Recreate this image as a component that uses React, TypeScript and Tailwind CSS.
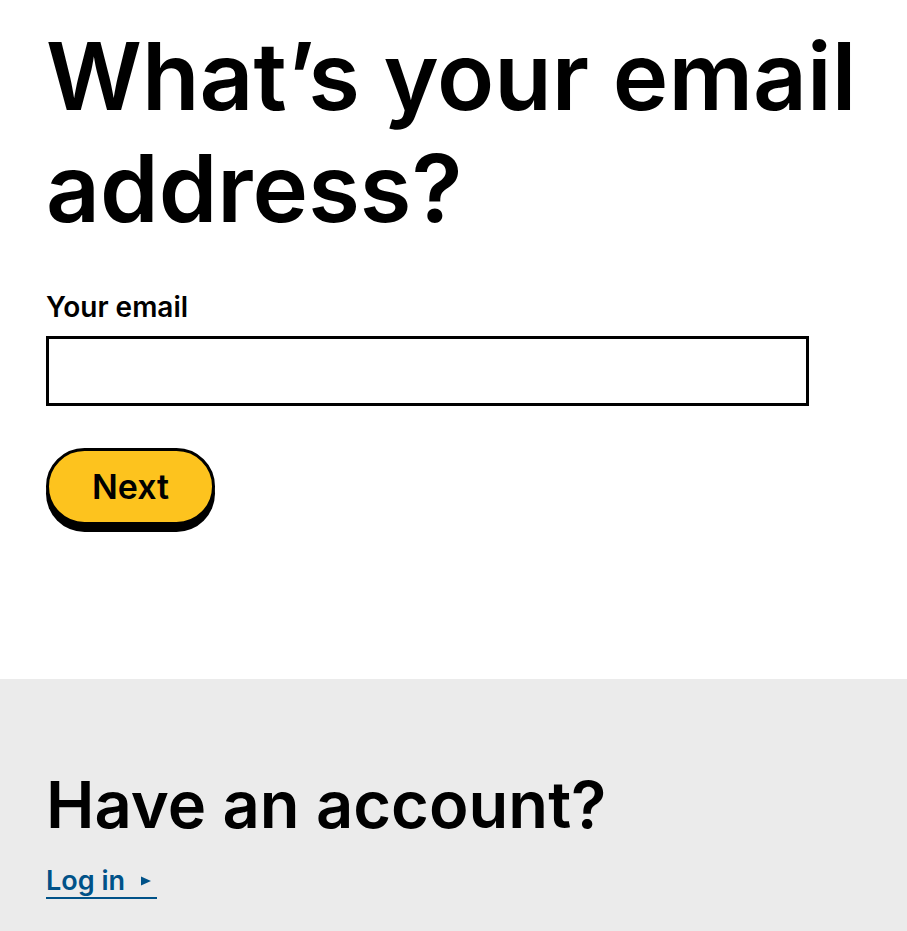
export default function App() {
  return (
    <div className="min-h-screen bg-[#ebebeb] font-['Century_Gothic','Inter','Open_Sans',sans-serif] text-black">
      <main className="bg-white px-[46px] pt-5 pb-[147px]">
        <h1 className="text-[94px] leading-[112px] font-semibold">What’s your email address?</h1>
        <form onSubmit={(e) => e.preventDefault()} className="mt-[45px]">
          <label htmlFor="email" className="block text-[28px] leading-9 font-semibold">Your email</label>
          <input
            id="email"
            type="email"
            className="mt-[11px] block h-[70px] w-full max-w-[763px] border-[3px] border-black bg-white px-4 text-[28px] outline-none"
          />
          <button
            type="submit"
            className="mt-[42px] mb-[7px] block h-[77px] min-w-[169px] rounded-full border-[3px] border-black bg-[#fdc31e] px-10 text-[34px] leading-[48px] font-semibold shadow-[0_7px_0_#000]"
          >
            Next
          </button>
        </form>
      </main>
      <section className="px-[46px] pt-[86px] pb-8">
        <h2 className="text-[65px] leading-[80px] font-semibold">Have an account?</h2>
        <a href="#login" className="mt-5 inline-flex items-center border-b-2 border-[#005288] pr-[6px] text-[27px] leading-8 font-semibold text-[#005288]">
          Log in
          <svg aria-hidden="true" viewBox="0 0 10 10" className="ml-4 h-[10px] w-[10px] fill-current">
            <path d="M0 .5 10 5 0 9.5Z" />
          </svg>
        </a>
      </section>
    </div>
  );
}
